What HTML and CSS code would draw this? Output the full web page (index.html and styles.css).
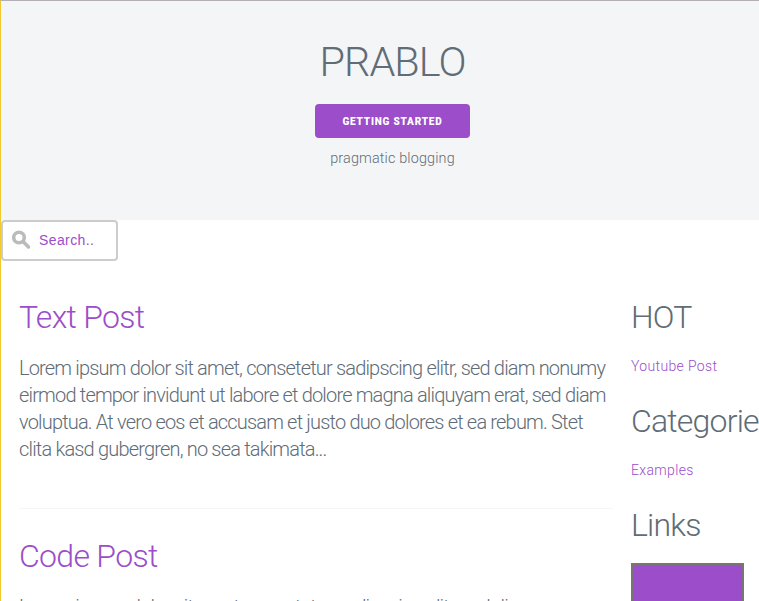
FILE: index.html
```html
<!DOCTYPE html>
<html lang="en">
<head>
<meta charset="utf-8">
<title>PRABLO</title>
<link rel="stylesheet" href="styles.css">
</head>
<body>
<header class="hero">
  <h1>PRABLO</h1>
  <a class="button">GETTING STARTED</a>
  <p class="tagline">pragmatic blogging</p>
</header>
<div class="search">
  <svg width="20" height="20" viewBox="0 0 20 20"><circle cx="7" cy="7.5" r="5.3"/><path d="M11 11.5L16.5 17" stroke-linecap="round"/></svg>
  <span>Search..</span>
</div>
<div class="layout">
  <main>
    <article>
      <h2>Text Post</h2>
      <p>Lorem ipsum dolor sit amet, consetetur sadipscing elitr, sed diam nonumy<br>eirmod tempor invidunt ut labore et dolore magna aliquyam erat, sed diam<br>voluptua. At vero eos et accusam et justo duo dolores et ea rebum. Stet<br>clita kasd gubergren, no sea takimata...</p>
    </article>
    <article>
      <h2>Code Post</h2>
      <p>Lorem ipsum dolor sit amet, consetetur sadipscing elitr, sed diam nonumy</p>
    </article>
  </main>
  <aside>
    <h3>HOT</h3>
    <a>Youtube Post</a>
    <h3>Categories</h3>
    <a>Examples</a>
    <h3>Links</h3>
    <div class="banner"></div>
  </aside>
</div>
</body>
</html>
```
FILE: styles.css
```css
* { box-sizing: border-box; }
html { height: 100%; overflow: hidden; }
body { margin: 0; height: 601px; overflow: hidden; border-top: 1px solid #b5afb5; border-left: 1px solid #f0c830; font-family: Roboto, sans-serif; color: #606c76; font-weight: 300; background: #fff; }
h1, h2, h3, p { margin: 0; font-weight: 300; }
.hero { height: 219px; padding: 36px 0 0 24px; background: #f4f5f6; display: flex; flex-direction: column; align-items: center; }
h1 { padding-left: 1px; font-size: 41.4px; line-height: 50px; letter-spacing: -0.9px; }
.button { margin-top: 17px; width: 155px; height: 34px; padding-left: 1px; border-radius: 4px; background: #9b4dca; color: #fff; font-size: 10px; font-weight: 900; line-height: 35px; letter-spacing: 0.8px; text-align: center; }
.tagline { margin-top: 9px; padding-left: 1px; font-size: 14.4px; line-height: 24px; letter-spacing: 0.15px; }
.search { width: 117px; height: 41px; border: 2px solid #ccc; border-radius: 4px; display: flex; align-items: center; padding: 0 0 1px 9px; color: #9b4dca; font-family: "Liberation Sans", sans-serif; font-size: 14px; font-weight: 400; letter-spacing: 0.4px; gap: 7px; }
.search svg { fill: none; stroke: #bbb; stroke-width: 3.5; }
.layout { display: flex; padding: 37px 0 0 18px; gap: 18px; }
main { width: 594px; flex: none; white-space: nowrap; }
h2, h3 { font-size: 32px; line-height: 38px; letter-spacing: -0.8px; }
h2 { color: #9b4dca; letter-spacing: -0.7px; }
article p { margin-top: 19px; font-size: 20px; line-height: 27px; letter-spacing: -0.82px; }
article { height: 211px; border-bottom: 1px solid #f4f5f6; margin-bottom: 28px; }
aside { width: 128px; flex: none; overflow: hidden; }
aside a { display: block; margin: 18px 0 24px; font-size: 14px; line-height: 24px; height: 24px; color: #9b4dca; letter-spacing: 0.35px; }
.banner { width: 113px; height: 100px; margin-top: 19px; background: #9b4dca; border: 2px solid #767676; }
```
